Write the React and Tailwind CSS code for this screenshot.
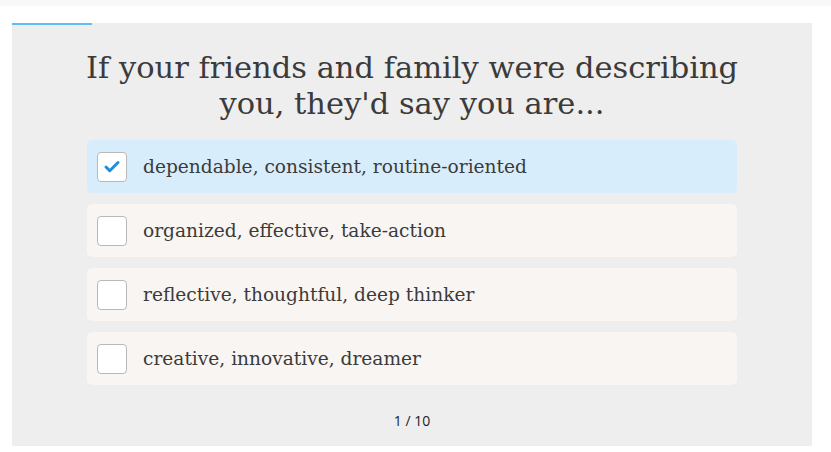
import { Check } from 'lucide-react';

const options = [
  { label: 'dependable, consistent, routine-oriented', checked: true },
  { label: 'organized, effective, take-action', checked: false },
  { label: 'reflective, thoughtful, deep thinker', checked: false },
  { label: 'creative, innovative, dreamer', checked: false },
];

export default function App() {
  return (
    <div className="w-[831px] h-[452px] bg-white">
      <div className="h-[6px] bg-[#f8f8f8]" />
      <div className="h-[17px]" />
      {/* Quiz panel */}
      <div className="mx-[12px] w-[800px] h-[423px] bg-[#eeeeee] relative">
        <div className="absolute left-0 top-0 w-[80px] h-[2px] bg-[#5cbef2]" />
        <div className="w-[650px] mx-auto pt-[27px]">
          <h1 className="-mx-[20px] text-center text-[#3b3b3b] text-[30.5px] leading-[36px] font-['DejaVu_Serif',serif]">
            If your friends and family were describing you, they'd say you are...
          </h1>
          <div className="mt-[18px] flex flex-col gap-[11px]">
            {options.map((opt) => (
              <div
                key={opt.label}
                className={`h-[53px] rounded-[5px] flex items-center pl-[10px] gap-[16px] ${opt.checked ? 'bg-[#d8edfb]' : 'bg-[#f8f5f2]'}`}
              >
                <div className="w-[30px] h-[30px] rounded-[4px] bg-white border border-[#b8b8b8] flex items-center justify-center">
                  {opt.checked && <Check size={18} strokeWidth={4} className="text-[#1b8fe2]" />}
                </div>
                <span className="text-[#3b3b3b] text-[18.6px] font-['DejaVu_Serif',serif]">{opt.label}</span>
              </div>
            ))}
          </div>
          <div className="mt-[25px] text-center text-[14px] font-medium text-[#222] font-['Open_Sans',sans-serif]">1 / 10</div>
        </div>
      </div>
    </div>
  );
}
